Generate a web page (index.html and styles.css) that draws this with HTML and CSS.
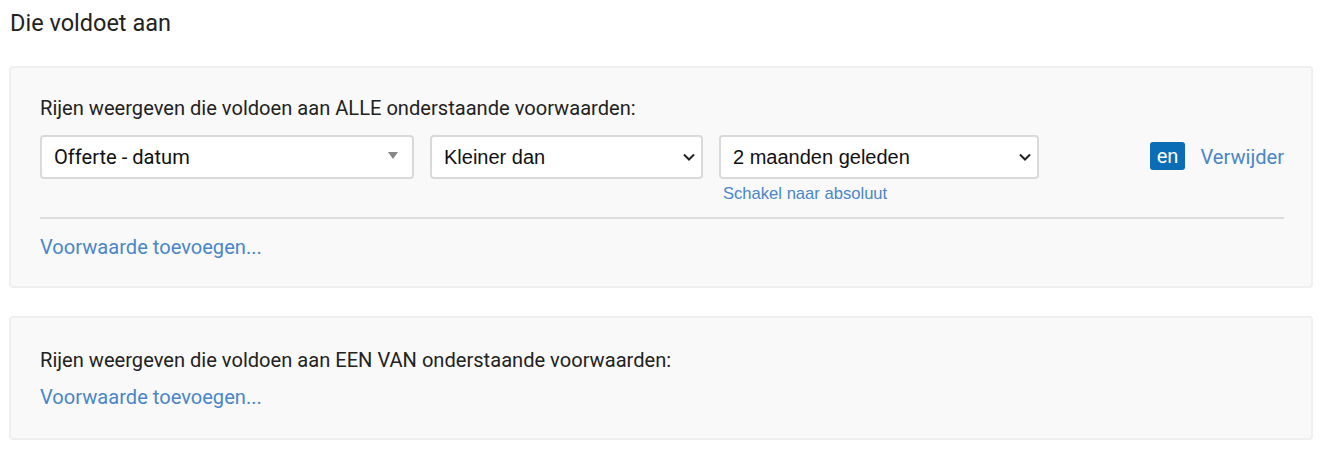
FILE: index.html
```
<!DOCTYPE html>
<html lang="nl">
<head>
    <meta charset="UTF-8">
    <title>Die voldoet aan</title>
    <link rel="stylesheet" href="styles.css">
</head>
<body>
    <div class="wrapper">
        <h2 class="section-title">Die voldoet aan</h2>

        <div class="panel panel-all">
            <p class="panel-title">Rijen weergeven die voldoen aan ALLE onderstaande voorwaarden:</p>
            <div class="condition">
                <div class="field field-column">
                    <div class="fake-select">
                        <span>Offerte - datum</span>
                        <span class="caret"></span>
                    </div>
                </div>
                <div class="field field-operator">
                    <div class="select-wrap">
                        <select class="native-select">
                            <option>Kleiner dan</option>
                        </select>
                        <svg class="chevron" width="12" height="8" viewBox="0 0 12 8"><path d="M1 1.5l5 5 5-5" fill="none" stroke="#222" stroke-width="2"/></svg>
                    </div>
                </div>
                <div class="field field-value">
                    <div class="select-wrap">
                        <select class="native-select">
                            <option>2 maanden geleden</option>
                        </select>
                        <svg class="chevron" width="12" height="8" viewBox="0 0 12 8"><path d="M1 1.5l5 5 5-5" fill="none" stroke="#222" stroke-width="2"/></svg>
                    </div>
                    <a href="#" class="small-link">Schakel naar absoluut</a>
                </div>
                <div class="condition-actions">
                    <span class="badge">en</span>
                    <a href="#" class="link">Verwijder</a>
                </div>
            </div>
            <hr class="divider">
            <a href="#" class="link">Voorwaarde toevoegen...</a>
        </div>

        <div class="panel panel-any">
            <p class="panel-title">Rijen weergeven die voldoen aan EEN VAN onderstaande voorwaarden:</p>
            <a href="#" class="link">Voorwaarde toevoegen...</a>
        </div>
    </div>
</body>
</html>
```

FILE: styles.css
```
body {
    margin: 0;
    font-family: Roboto, "Noto Sans", sans-serif;
    color: #222;
    background-color: #fff;
}
.wrapper {
    width: 1304px;
    padding: 8px 0 0 9px;
}
.section-title {
    margin: 0 0 0 1px;
    font-size: 23.5px;
    font-weight: 400;
    line-height: 30px;
    color: #222;
}
.panel {
    background-color: #f9f9f9;
    border: 2px solid #efefef;
    border-radius: 4px;
    padding: 28px 27px 27px 29px;
    font-size: 20.1px;
    line-height: 24px;
}
.panel-all {
    margin-top: 28px;
}
.panel-any {
    margin-top: 28px;
    padding-top: 30px;
    padding-bottom: 29px;
}
.panel-title {
    margin: 0 0 15px 0;
}
.panel-any .panel-title {
    margin-bottom: 13px;
}
.link {
    color: #4a86c8;
    text-decoration: none;
}
.condition {
    display: flex;
    align-items: flex-start;
    gap: 16px;
}
.field-column {
    width: 374px;
}
.field-operator {
    width: 273px;
}
.field-value {
    width: 320px;
}
.fake-select {
    height: 44px;
    box-sizing: border-box;
    background: #fff;
    border: 2px solid #d9d9d9;
    border-radius: 4px;
    display: flex;
    align-items: center;
    justify-content: space-between;
    padding: 0 14px 0 12px;
    color: #111;
}
.caret {
    width: 0;
    height: 0;
    border-left: 5px solid transparent;
    border-right: 5px solid transparent;
    border-top: 7px solid #888;
    margin-top: -4px;
}
.select-wrap {
    position: relative;
}
.native-select {
    display: block;
    width: 100%;
    height: 44px;
    box-sizing: border-box;
    appearance: none;
    -webkit-appearance: none;
    background: #fff;
    border: 2px solid #d9d9d9;
    border-radius: 4px;
    padding: 0 30px 0 12px;
    font-family: "Liberation Sans", Arial, sans-serif;
    font-size: 20px;
    color: #111;
}
.chevron {
    position: absolute;
    right: 8px;
    top: 18px;
    pointer-events: none;
}
.small-link {
    display: block;
    margin: 5px 0 0 4px;
    font-family: "Liberation Sans", Arial, sans-serif;
    font-size: 16.6px;
    line-height: 20px;
    color: #4a86c8;
    text-decoration: none;
}
.condition-actions {
    margin-left: auto;
    height: 44px;
    display: flex;
    align-items: center;
    gap: 15px;
}
.badge {
    background-color: #0a6db5;
    color: #fff;
    border-radius: 3px;
    padding: 2px 7px;
    line-height: 24px;
    margin-top: -2px;
}
.divider {
    border: 0;
    border-top: 2px solid #dcdcdc;
    margin: 13px 0 16px 0;
}
```
